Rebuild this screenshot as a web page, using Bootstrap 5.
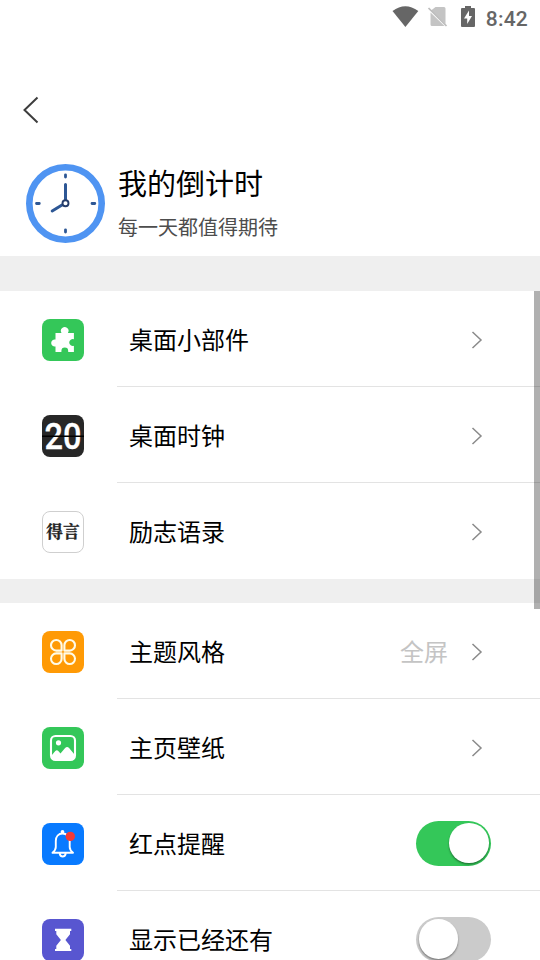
<!DOCTYPE html>
<html lang="zh-CN">
<head>
<meta charset="utf-8">
<meta name="viewport" content="width=device-width, initial-scale=1">
<title>我的倒计时</title>
<link href="https://cdn.jsdelivr.net/npm/bootstrap@5.3.0/dist/css/bootstrap.min.css" rel="stylesheet">
<style>
body{font-family:"Noto Sans CJK SC",sans-serif;color:#000}
.screen{width:540px;height:960px}
svg{display:block;flex:none}
.status-bar{height:36px;padding:0 12px 2px 0;color:#666}
.status-time{font:500 21px/24px Roboto,sans-serif;letter-spacing:.2px;margin:4px 0 0 9px}
.battery{margin-left:10px}
.title-bar{height:120px;padding:60px 0 0 22px}
.profile{height:100px;padding:8px 0 0 26px}
.profile-text{margin-left:13px}
.profile-name{font-size:29px;line-height:36px}
.profile-motto{font-size:20px;line-height:28px;margin-top:13px;color:#4d4d4d}
.gap-band{background:#efefef;height:24px}
.gap-band-top{height:35px}
.setting{height:96px;padding-left:42px}
.setting>svg{margin-top:28px}
.setting-body{margin-left:33px;padding:3px 49px 0 12px;border-bottom:1px solid #e3e3e3;font-size:24px;line-height:36px}
.setting-body>span:not(.toggle){margin-top:-2px}
.flush .setting-body{border-color:transparent}
.setting-value{color:#c4c4c4;margin-right:23px}
.chevron{margin-right:8px}
.toggle{width:75px;height:45px;border-radius:23px;background:#cbcbcb;padding:0 2.5px;margin-top:-2px}
.toggle-on{background:#34c759}
.knob{width:39.500px;height:39.500px;border-radius:50%;background:#fff;box-shadow:0 1.5px 2px rgba(0,0,0,.4)}
.scroll-thumb{right:0;top:0;width:6px;height:318px;background:rgba(0,0,0,.31)}
</style>
<script src="https://cdn.jsdelivr.net/npm/bootstrap@5.3.0/dist/js/bootstrap.bundle.min.js"></script>
</head>
<body class="bg-white overflow-hidden">
<div class="screen overflow-hidden">
  <div class="status-bar d-flex align-items-center justify-content-end">
    <svg width="27" height="22" viewBox="0 0 27 22"><path d="M.5 5Q13.300-4.400 26.300 5L13.400 21z" fill="#666"/></svg>
    <svg class="ms-2" width="22" height="22" viewBox="0 0 22 22"><path d="M8.500 1H17q1.500 0 1.500 1.500V18L4 4.500zM3.500 6.500L17.500 20H5q-1.500 0-1.500-1.500z" fill="#c4c4c4"/><path d="M1.500 2L19.500 20" stroke="#bdbdbd" stroke-width="1.700"/></svg>
    <svg class="battery" width="18" height="24" viewBox="0 0 18 24"><path d="M3 3H6V1h6v2h3q1 0 1 1v17q0 1-1 1H3Q2 22 2 21V4Q2 3 3 3z" fill="#666"/><path d="M10 5.500L5 13.500h3.200V19l4.800-8H10z" fill="#fff"/></svg>
    <span class="status-time">8:42</span>
  </div>
  <div class="title-bar">
    <svg width="18" height="28" viewBox="0 0 18 28"><path d="M15.500 1.500L2.500 14l13 12.500" fill="none" stroke="#3d3d3d" stroke-width="2"/></svg>
  </div>
  <div class="profile d-flex align-items-start">
    <svg width="79" height="79" viewBox="0 0 79 79">
      <circle cx="39.500" cy="39.500" r="36.200" fill="#fff" stroke="#4f94f2" stroke-width="6.600"/>
      <g stroke="#2d5795" fill="none" stroke-linecap="round" stroke-width="3"><path d="M39.500 20.500v15M36 41l-9.800 6"/><path stroke-width="2.800" d="M39.500 10.800v2.300M39.500 65.800v2.300M10.500 39.500h2.800M66 39.500h2.800"/></g>
      <circle cx="39.500" cy="39.300" r="3" fill="#fff" stroke="#253d6b" stroke-width="1.900"/>
    </svg>
    <div class="profile-text">
      <div class="profile-name">我的倒计时</div>
      <div class="profile-motto">每一天都值得期待</div>
    </div>
  </div>
  <div class="gap-band gap-band-top"></div>
  <div class="position-relative">
    <div class="scroll-thumb position-absolute"></div>
    <div class="setting d-flex">
      <svg width="42" height="42" viewBox="0 0 42 42"><rect width="42" height="42" rx="8" fill="#34c759"/><path d="M13.500 14H19.500a3.800 3.800 0 1 1 6.400 0h6v6.200a3.500 3.500 0 1 0 0 6.600V33h-5.700v-1a3.400 3.400 0 0 0-6.800 0v1h-5.900v-5.600a3.500 3.500 0 1 1 0-6.800z" fill="#fff"/></svg>
      <div class="setting-body d-flex flex-grow-1 align-items-center"><span class="flex-grow-1">桌面小部件</span><svg class="chevron" width="12" height="18" viewBox="0 0 12 18"><path d="M1.500 1L10 9l-8.500 8" fill="none" stroke="#8a8a8a" stroke-width="1.500"/></svg></div>
    </div>
    <div class="setting d-flex">
      <svg width="42" height="42" viewBox="0 0 42 42" overflow="visible"><rect width="42" height="42" rx="8" fill="#272727"/><text x="2.500" y="34.300" textLength="37" lengthAdjust="spacingAndGlyphs" font-family="Roboto,sans-serif" font-weight="500" font-size="37.500" fill="#fff" stroke="#fff" stroke-width=".3">20</text><path d="M0 21.200h42" stroke="#000" stroke-width="1.500"/></svg>
      <div class="setting-body d-flex flex-grow-1 align-items-center"><span class="flex-grow-1">桌面时钟</span><svg class="chevron" width="12" height="18" viewBox="0 0 12 18"><path d="M1.500 1L10 9l-8.500 8" fill="none" stroke="#8a8a8a" stroke-width="1.500"/></svg></div>
    </div>
    <div class="setting flush d-flex">
      <svg width="42" height="42" viewBox="0 0 42 42"><rect x=".5" y=".5" width="41" height="41" rx="7.500" fill="#fff" stroke="#cfcfcf"/><text x="4.300" y="26.700" font-family="'Noto Serif CJK SC','Noto Sans CJK SC',serif" font-weight="700" font-size="16.700" fill="#222" stroke="#222" stroke-width=".3">得言</text></svg>
      <div class="setting-body d-flex flex-grow-1 align-items-center"><span class="flex-grow-1">励志语录</span><svg class="chevron" width="12" height="18" viewBox="0 0 12 18"><path d="M1.500 1L10 9l-8.500 8" fill="none" stroke="#8a8a8a" stroke-width="1.500"/></svg></div>
    </div>
  </div>
  <div class="gap-band"></div>
  <div class="setting d-flex">
    <svg width="42" height="42" viewBox="0 0 42 42"><rect width="42" height="42" rx="8" fill="#ff9a05"/><g fill="none" stroke="#fffbe8" stroke-width="2.100" stroke-linejoin="round"><path d="M19.600 19.600h-5.200a5.300 5.300 0 1 1 5.200-5.300z"/><path d="M22.400 19.600h5.200a5.300 5.300 0 1 0-5.200-5.300z"/><path d="M19.600 22.400h-5.200a5.300 5.300 0 1 0 5.200 5.300z"/><path d="M22.400 22.400h5.200a5.300 5.300 0 1 1-5.200 5.300z"/></g></svg>
    <div class="setting-body d-flex flex-grow-1 align-items-center"><span class="flex-grow-1">主题风格</span><span class="setting-value">全屏</span><svg class="chevron" width="12" height="18" viewBox="0 0 12 18"><path d="M1.500 1L10 9l-8.500 8" fill="none" stroke="#8a8a8a" stroke-width="1.500"/></svg></div>
  </div>
  <div class="setting d-flex">
    <svg width="42" height="42" viewBox="0 0 42 42"><rect width="42" height="42" rx="8" fill="#34c759"/><rect x="9" y="9" width="24" height="24" rx="4.500" fill="none" stroke="#fff" stroke-width="2.100"/><circle cx="16.500" cy="15.800" r="2.600" fill="#fff"/><path d="M9.500 28.500l3.800-4.500q1.600-1.500 3 0l2.200 2.400 4.600-5.500q2-1.900 4 0l5.400 6.600V30q0 3-3 3h-17q-3 0-3-3z" fill="#fff"/></svg>
    <div class="setting-body d-flex flex-grow-1 align-items-center"><span class="flex-grow-1">主页壁纸</span><svg class="chevron" width="12" height="18" viewBox="0 0 12 18"><path d="M1.500 1L10 9l-8.500 8" fill="none" stroke="#8a8a8a" stroke-width="1.500"/></svg></div>
  </div>
  <div class="setting d-flex">
    <svg width="42" height="42" viewBox="0 0 42 42"><rect width="42" height="42" rx="8" fill="#087aff"/><g fill="none" stroke="#fff" stroke-width="1.900" stroke-linecap="round" stroke-linejoin="round"><path d="M20.500 10.500c-4 0-6.700 3.100-6.700 7.500v6q0 3-3.300 5.800H31Q27.700 27 27.700 24v-6c0-4.400-3-7.500-7.200-7.500zM17.800 31q.6 2.500 2.900 2.500t2.900-2.500"/></g><circle cx="20.500" cy="8.900" r="1.900" fill="#fff"/><circle cx="28.300" cy="13.400" r="4.700" fill="#f43a35"/></svg>
    <div class="setting-body d-flex flex-grow-1 align-items-center"><span class="flex-grow-1">红点提醒</span><span class="toggle toggle-on d-flex align-items-center justify-content-end"><span class="knob"></span></span></div>
  </div>
  <div class="setting d-flex">
    <svg width="42" height="42" viewBox="0 0 42 42"><rect width="42" height="42" rx="8" fill="#5856d0"/><path d="M13 9.800h16.300v2.100h-1.300v3.300L23.400 21l4.600 5.800v3.100h1.300V32H13v-2.100h1.300v-3.100L18.900 21l-4.600-5.800v-3.300H13z" fill="#fff"/></svg>
    <div class="setting-body d-flex flex-grow-1 align-items-center"><span class="flex-grow-1">显示已经还有</span><span class="toggle d-flex align-items-center"><span class="knob"></span></span></div>
  </div>
</div>
</body>
</html>
